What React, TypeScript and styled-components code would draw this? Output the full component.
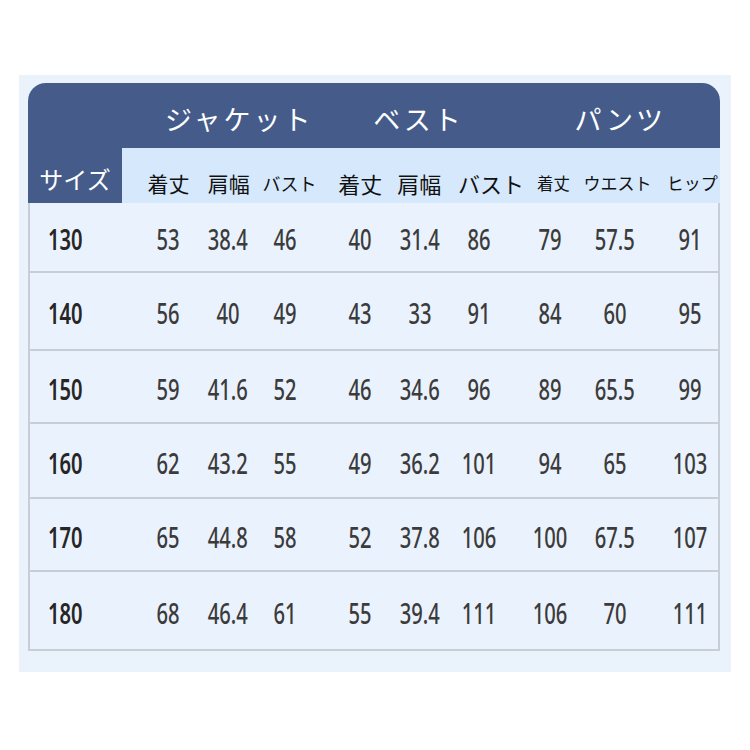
import React from "react";
import styled, { createGlobalStyle } from "styled-components";

const COLS = [76, 58.5, 66, 67.5, 59.5, 65, 68, 70, 67.5];
const TEMPLATE = `94px ${COLS.map((w) => `${w}px`).join(" ")}`;

// nudges so each column's numbers sit where the reference has them
const DATA_SHIFT = [8, 1, -4.5, 4, 0.5, -3, 1.5, -2.5, 4];

const GROUPS = [
  { label: "ジャケット", from: 2, to: 5, shift: 17 },
  { label: "ベスト", from: 5, to: 8, shift: 0 },
  { label: "パンツ", from: 8, to: 11, shift: 3 },
];

const SUB_HEADS = [
  { label: "着丈", size: 21, shift: 8.5 },
  { label: "肩幅", size: 21, shift: 1.5 },
  { label: "バスト", size: 18, shift: 0 },
  { label: "着丈", size: 22, shift: 4 },
  { label: "肩幅", size: 22, shift: -0.5 },
  { label: "バスト", size: 22, shift: 9 },
  { label: "着丈", size: 16.5, shift: 5 },
  { label: "ウエスト", size: 17, shift: 0 },
  { label: "ヒップ", size: 17, shift: 6 },
];

const ROWS = [
  { size: "130", h: 70, values: ["53", "38.4", "46", "40", "31.4", "86", "79", "57.5", "91"] },
  { size: "140", h: 78, values: ["56", "40", "49", "43", "33", "91", "84", "60", "95"] },
  { size: "150", h: 73, values: ["59", "41.6", "52", "46", "34.6", "96", "89", "65.5", "99"] },
  { size: "160", h: 75, values: ["62", "43.2", "55", "49", "36.2", "101", "94", "65", "103"] },
  { size: "170", h: 73, values: ["65", "44.8", "58", "52", "37.8", "106", "100", "67.5", "107"] },
  { size: "180", h: 79, values: ["68", "46.4", "61", "55", "39.4", "111", "106", "70", "111"] },
];

const GlobalStyle = createGlobalStyle`
  html, body {
    margin: 0;
    padding: 0;
    background: #ffffff;
  }
`;

const Page = styled.div`
  width: 750px;
  height: 750px;
  padding: 75px 19px 0;
  box-sizing: border-box;
`;

const Panel = styled.div`
  width: 712px;
  height: 597px;
  box-sizing: border-box;
  padding: 8px 11px 21px 9px;
  background: #eaf2fc;
`;

const Table = styled.div`
  display: flex;
  flex-direction: column;
  width: 692px;
`;

const Head = styled.div`
  display: grid;
  grid-template-columns: ${TEMPLATE};
  grid-template-rows: 65px 55px;
  background: #455c8b;
  border-radius: 18px 18px 0 0;
  overflow: hidden;
  font-family: "Noto Sans CJK JP", "Noto Sans", sans-serif;
`;

const SizeHead = styled.div`
  grid-column: 1;
  grid-row: 1 / 3;
  display: flex;
  align-items: flex-end;
  justify-content: center;
  padding-bottom: 7px;
  color: #ffffff;
  font-size: 24px;
`;

const GroupTitle = styled.div<{ $from: number; $to: number; $shift: number }>`
  grid-row: 1;
  grid-column: ${(p) => p.$from} / ${(p) => p.$to};
  display: flex;
  align-items: center;
  justify-content: center;
  padding-top: 6px;
  padding-left: ${(p) => Math.max(0, p.$shift * 2)}px;
  padding-right: ${(p) => Math.max(0, -p.$shift * 2)}px;
  color: #ffffff;
  font-size: 27px;
  letter-spacing: 3px;
  white-space: nowrap;
`;

const SubBand = styled.div`
  grid-row: 2;
  grid-column: 2 / 11;
  background: #d6e8fb;
`;

const SubHead = styled.div<{ $col: number; $size: number; $shift: number }>`
  grid-row: 2;
  grid-column: ${(p) => p.$col};
  display: flex;
  align-items: center;
  justify-content: center;
  padding-top: 14px;
  padding-left: ${(p) => Math.max(0, p.$shift * 2)}px;
  padding-right: ${(p) => Math.max(0, -p.$shift * 2)}px;
  color: #111111;
  font-size: ${(p) => p.$size}px;
  white-space: nowrap;
  z-index: 1;
`;

const Body = styled.div`
  display: flex;
  flex-direction: column;
  border-left: 2px solid #c9ced6;
  border-right: 2px solid #c9ced6;
  background: #eaf2fd;
`;

const Row = styled.div<{ $h: number }>`
  display: grid;
  grid-template-columns: ${TEMPLATE};
  height: ${(p) => p.$h}px;
  box-sizing: border-box;
  border-bottom: 2px solid #c9ced6;
  margin-left: -2px;
  margin-right: -2px;
  font-family: "Noto Sans", "Liberation Sans", sans-serif;
`;

const SizeCell = styled.div`
  display: flex;
  align-items: center;
  padding-left: 20px;
  padding-top: 4px;
  color: #262626;
  font-size: 28px;
  font-weight: 600;
`;

const Cell = styled.div<{ $shift: number }>`
  display: flex;
  align-items: center;
  justify-content: center;
  padding-top: 4px;
  padding-left: ${(p) => Math.max(0, p.$shift * 2)}px;
  padding-right: ${(p) => Math.max(0, -p.$shift * 2)}px;
  color: #3b3b3b;
  font-size: 28px;
  font-weight: 500;
  white-space: nowrap;
`;

const Narrow = styled.span<{ $origin: string }>`
  display: inline-block;
  transform: scaleX(0.72);
  transform-origin: ${(p) => p.$origin};
`;

const App: React.FC = () => (
  <>
    <GlobalStyle />
    <Page>
      <Panel>
        <Table>
          <Head>
            <SizeHead>サイズ</SizeHead>
            {GROUPS.map((g) => (
              <GroupTitle key={g.label} $from={g.from} $to={g.to} $shift={g.shift}>
                {g.label}
              </GroupTitle>
            ))}
            <SubBand />
            {SUB_HEADS.map((s, i) => (
              <SubHead key={i} $col={i + 2} $size={s.size} $shift={s.shift}>
                {s.label}
              </SubHead>
            ))}
          </Head>
          <Body>
            {ROWS.map((r) => (
              <Row key={r.size} $h={r.h}>
                <SizeCell>
                  <Narrow $origin="left center">{r.size}</Narrow>
                </SizeCell>
                {r.values.map((v, i) => (
                  <Cell key={i} $shift={DATA_SHIFT[i]}>
                    <Narrow $origin="center">{v}</Narrow>
                  </Cell>
                ))}
              </Row>
            ))}
          </Body>
        </Table>
      </Panel>
    </Page>
  </>
);

export default App;
